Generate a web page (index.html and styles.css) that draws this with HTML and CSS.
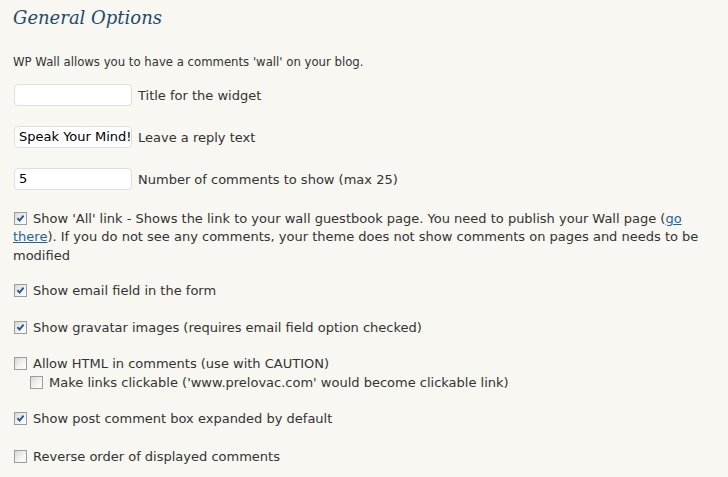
FILE: index.html
```html
<!DOCTYPE html>
<html>
<head>
<meta charset="utf-8">
<link rel="stylesheet" href="styles.css">
</head>
<body>
<div class="wrap">
  <h2 class="title">General Options</h2>
  <p class="intro">WP Wall allows you to have a comments 'wall' on your blog.</p>

  <div class="field"><span class="input"></span><span class="lbl">Title for the widget</span></div>
  <div class="field"><span class="input">Speak Your Mind!</span><span class="lbl">Leave a reply text</span></div>
  <div class="field"><span class="input">5</span><span class="lbl">Number of comments to show (max 25)</span></div>

  <p class="opt first"><span class="cb on"><svg viewBox="0 0 11 11" width="11" height="11"><polyline points="2.5,5.2 4.5,7.6 8.6,2.6" fill="none" stroke="#23529c" stroke-width="1.9"/></svg></span><span>Show 'All' link - Shows the link to your wall guestbook page. You need to publish your Wall page (</span><a href="#">go </a><a href="#">there</a><span>). If you do not see any comments, your theme does not show comments on pages and needs to be</span> <span>modified</span></p>

  <p class="opt"><span class="cb on"><svg viewBox="0 0 11 11" width="11" height="11"><polyline points="2.5,5.2 4.5,7.6 8.6,2.6" fill="none" stroke="#23529c" stroke-width="1.9"/></svg></span>Show email field in the form</p>

  <p class="opt"><span class="cb on"><svg viewBox="0 0 11 11" width="11" height="11"><polyline points="2.5,5.2 4.5,7.6 8.6,2.6" fill="none" stroke="#23529c" stroke-width="1.9"/></svg></span>Show gravatar images (requires email field option checked)</p>

  <div class="opt">
    <div><span class="cb"></span>Allow HTML in comments (use with CAUTION)</div>
    <div class="sub"><span class="cb"></span>Make links clickable ('www.prelovac.com' would become clickable link)</div>
  </div>

  <p class="opt pre-last"><span class="cb on"><svg viewBox="0 0 11 11" width="11" height="11"><polyline points="2.5,5.2 4.5,7.6 8.6,2.6" fill="none" stroke="#23529c" stroke-width="1.9"/></svg></span>Show post comment box expanded by default</p>

  <p class="opt"><span class="cb"></span>Reverse order of displayed comments</p>
</div>
</body>
</html>
```

FILE: styles.css
```css
html, body {
  margin: 0;
  padding: 0;
  background: #f8f7f2;
}
body {
  font-family: "DejaVu Sans", Verdana, sans-serif;
  font-size: 13px;
  line-height: 18.5px;
  color: #333333;
}
.wrap {
  padding: 0 8px 0 13px;
  overflow: hidden;
  height: 477px;
}
.title {
  margin: 0;
  font-family: "DejaVu Serif", Georgia, serif;
  font-style: italic;
  font-weight: normal;
  font-size: 18px;
  line-height: 36px;
  color: #1d4a6e;
}
.intro {
  margin: 17px 0 12px;
  font-size: 11.7px;
}
.field {
  display: flex;
  align-items: center;
  height: 22px;
  margin: 0 0 20px 1px;
}
.input {
  box-sizing: border-box;
  width: 118px;
  height: 22px;
  background: #ffffff;
  border: 1px solid #dfdfdf;
  border-radius: 4px;
  padding: 0 4px;
  color: #000000;
  line-height: 20px;
  white-space: nowrap;
  overflow: hidden;
  margin-right: 6px;
}
.lbl {
  padding-top: 3px;
}
.opt {
  margin: 0 0 18px;
}
.opt.first {
  margin-bottom: 17px;
}
.opt.pre-last {
  margin-bottom: 19px;
}
.sub {
  padding-left: 16px;
}
.cb {
  display: inline-block;
  box-sizing: border-box;
  width: 13px;
  height: 13px;
  border: 1px solid #9c9c9c;
  background: linear-gradient(135deg, #d8d8d3 0%, #f4f4f0 60%, #ffffff 100%);
  vertical-align: -2px;
  margin: 0 6px 0 1px;
}
.cb svg {
  display: block;
}
a {
  color: #21649b;
  text-decoration: underline;
}
```
